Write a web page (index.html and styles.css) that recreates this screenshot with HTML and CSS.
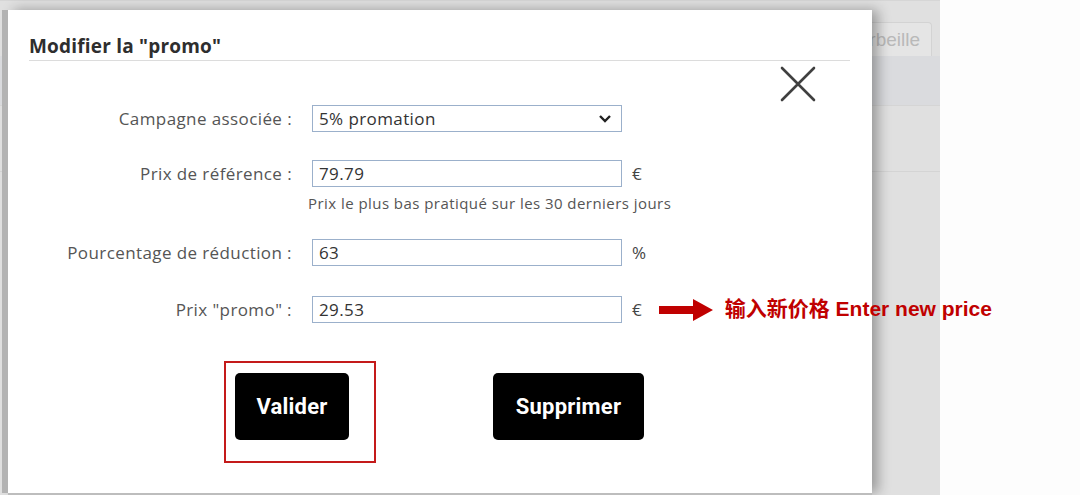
FILE: index.html
```html
<!DOCTYPE html>
<html>
  <head>
    <link rel="stylesheet" href="styles.css">
  </head>
  <body>
    <div class="screen">
      <div class="app">
        <div class="tabs">
          <div class="tab">Corbeille</div>
        </div>
        <div class="toolbar"></div>
        <div class="subbar"></div>

        <div class="dialog">
          <h2 class="dialog-title">Modifier la "promo"</h2>
          <button class="close" type="button">
            <svg width="36" height="36" viewBox="0 0 36 36">
              <path d="M2 2 L34 34 M34 2 L2 34" stroke="#404040" stroke-width="2.6" stroke-linecap="round" fill="none"/>
            </svg>
          </button>

          <div class="form">
            <div class="row row-campaign">
              <label class="field-label">Campagne associée :</label>
              <div class="field select">
                <span>5% promation</span>
                <svg width="14" height="9" viewBox="0 0 14 9">
                  <path d="M2 2 L7 7 L12 2" stroke="#222" stroke-width="2.4" fill="none"/>
                </svg>
              </div>
            </div>
            <div class="row row-ref">
              <label class="field-label">Prix de référence :</label>
              <input class="field" value="79.79">
              <span class="unit">€</span>
            </div>
            <div class="hint">Prix le plus bas pratiqué sur les 30 derniers jours</div>
            <div class="row row-pct">
              <label class="field-label">Pourcentage de réduction :</label>
              <input class="field" value="63">
              <span class="unit">%</span>
            </div>
            <div class="row row-promo">
              <label class="field-label">Prix "promo" :</label>
              <input class="field" value="29.53">
              <span class="unit">€</span>
              <svg class="note-arrow" width="54" height="22" viewBox="0 0 54 22">
                <path d="M0 7 H34 V0 L54 11 L34 22 V15 H0 Z" fill="#c00000"/>
              </svg>
              <span class="note">输入新价格 Enter new price</span>
            </div>
          </div>

          <div class="actions">
            <div class="highlight">
              <button class="btn" type="button">Valider</button>
            </div>
            <button class="btn btn-delete" type="button">Supprimer</button>
          </div>
        </div>
      </div>
      <div class="margin"></div>
    </div>
  </body>
</html>
```

FILE: styles.css
```css
html, body {
  margin: 0;
  padding: 0;
}

* {
  box-sizing: border-box;
}

body {
  font-family: "Open Sans", "Noto Sans", sans-serif;
  background: #fdfdfd;
}

.screen {
  display: flex;
  width: 1080px;
  height: 495px;
  overflow: hidden;
}

.app {
  position: relative;
  width: 940px;
  height: 495px;
  background: #e0e0e0;
  border-top: 1px solid #d6d6d6;
}

.margin {
  flex: 1;
  background: #fdfdfd;
}

/* background page, mostly hidden under the modal */
.tabs {
  display: flex;
  justify-content: flex-end;
  padding: 21px 8px 0 0;
}

.tab {
  width: 130px;
  height: 34px;
  padding: 6px 11px 0 0;
  text-align: right;
  font-family: "Liberation Sans", Arial, sans-serif;
  font-size: 19px;
  color: #b9b9b9;
  background: #e5e5e5;
  border: 1px solid #d3d3d3;
  border-bottom: none;
  border-radius: 4px 4px 0 0;
}

.toolbar {
  height: 50px;
  background: #dadbde;
  border-bottom: 1px solid #d5d5d5;
}

.subbar {
  height: 66px;
  border-bottom: 1px solid #d4d4d4;
}

/* modal */
.dialog {
  position: absolute;
  left: 8px;
  top: 9px;
  width: 864px;
  height: 483px;
  background: #fff;
  box-shadow: -6px 0 0 #b3b3b3, 0 3px 0 #bdbdbd, 6px 0 12px rgba(0, 0, 0, 0.32);
}

.dialog-title {
  margin: 0 22px 0 21px;
  padding: 24px 0 2px;
  font-size: 19px;
  line-height: 24px;
  font-weight: 700;
  letter-spacing: 0.2px;
  color: #2e2e2e;
  border-bottom: 1px solid #dcdcdc;
}

.close {
  position: absolute;
  left: 772px;
  top: 56px;
  padding: 0;
  border: none;
  background: none;
  line-height: 0;
}

.form {
  margin-top: 44px;
}

.row {
  display: flex;
  align-items: center;
  height: 27px;
}

.row-ref {
  margin-top: 28px;
}

.row-pct {
  margin-top: 27px;
}

.row-promo {
  margin-top: 30px;
}

.field-label {
  flex: none;
  width: 284px;
  margin-right: 20px;
  text-align: right;
  font-size: 17px;
  letter-spacing: 0.4px;
  color: #555;
}

.field {
  flex: none;
  width: 310px;
  height: 27px;
  padding: 0 6px;
  border: 1px solid #9bb0cb;
  border-radius: 0;
  font-family: inherit;
  font-size: 17px;
  letter-spacing: 0.4px;
  color: #333;
  background: #fff;
  outline: none;
}

.select {
  display: flex;
  align-items: center;
  justify-content: space-between;
  padding-right: 9px;
}

.unit {
  flex: none;
  margin-left: 10px;
  font-size: 17px;
  color: #444;
}

.hint {
  margin: 7px 0 0 300px;
  font-size: 15px;
  line-height: 18px;
  letter-spacing: 0.45px;
  color: #555;
}

.note-arrow {
  flex: none;
  margin-left: 17px;
}

.note {
  flex: none;
  margin: 0 0 6px 12px;
  white-space: nowrap;
  font-family: "Liberation Sans", "Noto Sans CJK SC", sans-serif;
  font-size: 21px;
  font-weight: 700;
  color: #c00000;
}

.actions {
  display: flex;
  align-items: flex-start;
  margin-top: 38px;
  padding-left: 216px;
}

.highlight {
  padding: 10px 25px 21px 9px;
  border: 2px solid #c41a1a;
}

.btn {
  width: 114px;
  height: 67px;
  border: none;
  border-radius: 5px;
  background: #000;
  color: #fff;
  font-family: Roboto, sans-serif;
  font-size: 22px;
  font-weight: 700;
  letter-spacing: 0.2px;
}

.btn-delete {
  width: 151px;
  margin: 12px 0 0 117px;
}
```
